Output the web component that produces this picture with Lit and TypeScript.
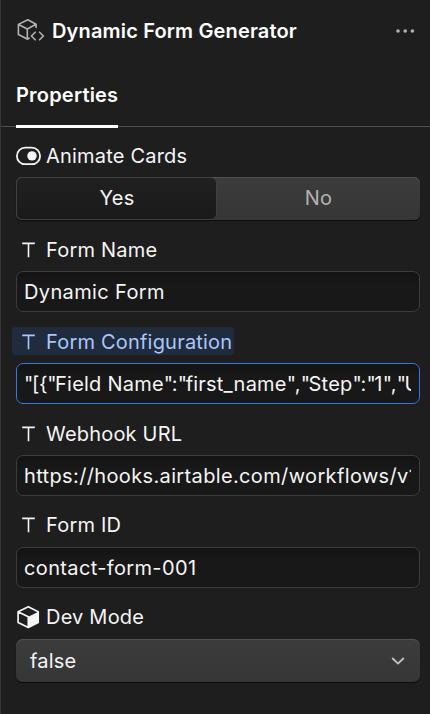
import { LitElement, html, css, svg, nothing } from "lit";
import { customElement, property } from "lit/decorators.js";
import { classMap } from "lit/directives/class-map.js";

const textIcon = svg`<path d="M6.2 5.4H18.8M12.5 5.4V19.2" stroke-width="1.6"/>`;
const toggleIcon = svg`<rect x="0.9" y="3.6" width="23.2" height="16.6" rx="8.3" stroke-width="1.8"/><circle cx="16" cy="11.9" r="4.7" fill="currentColor" stroke="none"/>`;
const cubeIcon = svg`<path d="M12.3 1.7 22.2 6.7V17.4L12.3 22.4 2.1 17.4V6.7Z M2.4 7 12.3 11.8V22" stroke-width="1.7" stroke-linejoin="round"/><path d="M12.3 11.8 22.4 6.7V17.6L12.3 22.6Z" fill="currentColor" stroke="none"/>`;
const icons = { text: textIcon, toggle: toggleIcon, cube: cubeIcon };

@customElement("property-row")
class PropertyRow extends LitElement {
  @property() label = "";
  @property() icon: keyof typeof icons = "text";
  @property() value = "";
  @property({ type: Boolean }) active = false;
  @property({ type: Boolean }) raised = false;

  static styles = css`
    :host { display: block; }
    .label {
      box-sizing: border-box; display: flex; align-items: center; width: max-content; height: 28px;
      margin: 0 0 8px -4px; padding: 1px 2px 0 4px; border-radius: 4px;
      font-size: 20px; letter-spacing: 0.2px; color: #f5f5f5;
    }
    .label.active { background: #202c3d; color: #a9c7fa; }
    .label.raised { padding: 0 2px 1px 4px; }
    .icon { width: 25px; height: 24px; margin-right: 5px; fill: none; stroke: currentColor; flex: none; }
    .field {
      box-sizing: border-box; height: 41px; padding: 0 8px 0 7px;
      border: 1px solid #3c3c3c; border-radius: 7px;
      background: linear-gradient(#131313, #181818 30%);
      color: #f5f5f5; font-size: 20px; line-height: 40px; letter-spacing: 0.36px;
    }
    .field.active { border-color: #3478e0; letter-spacing: 0.22px; }
    .value { display: block; overflow: hidden; white-space: nowrap; height: 39px; }
    .quote { letter-spacing: -1.4px; }
    .bracket { letter-spacing: -0.3px; }
  `;

  render() {
    const active = { active: this.active };
    const parts = this.value.split(/(["[{])/).map(p =>
      p === '"' ? html`<span class="quote">${p}</span>`
      : p === "[" || p === "{" ? html`<span class="bracket">${p}</span>` : p);
    return html`
      <div class="label ${classMap({ ...active, raised: this.raised })}">
        <svg class="icon" viewBox="0 0 25 24">${icons[this.icon]}</svg><span>${this.label}</span>
      </div>
      ${this.value
        ? html`<div class="field ${classMap(active)}"><span class="value">${parts}</span></div>`
        : nothing}
      <slot></slot>
    `;
  }
}

@customElement("app-root")
class AppRoot extends LitElement {
  static styles = css`
    :host {
      display: block; box-sizing: border-box; width: 430px; height: 714px; overflow: hidden;
      border-left: 1px solid #363636; background: #1e1e1e; color: #f5f5f5;
      font-family: Inter, sans-serif; font-size: 20px;
    }
    .header { display: flex; align-items: center; height: 62px; padding: 0 15px; }
    .component { width: 28px; height: 26px; margin: 0 7px 0 1px; fill: none; stroke: #b2b2b2; stroke-width: 1.6; stroke-linejoin: round; stroke-linecap: round; }
    .title { flex: 1; font-weight: 600; color: #fff; letter-spacing: 0.16px; }
    .more { width: 20px; height: 6px; fill: #b2b2b2; }
    .tabs { height: 66px; box-sizing: border-box; padding: 0 15px; display: flex;
      background: linear-gradient(#4e4e4e, #4e4e4e) 0 64px / 100% 1px no-repeat; }
    .tab { box-sizing: border-box; height: 66px; border-bottom: 3px solid #fff; line-height: 66px; font-weight: 600; color: #fff; letter-spacing: 0.2px; }
    .rows { display: flex; flex-direction: column; gap: 15px; padding: 13px 10px 0 15px; }
    .segmented, .select {
      box-sizing: border-box; height: 43px; display: flex; border-radius: 6px;
      background: linear-gradient(#3c3c3c, #363636);
      box-shadow: inset 0 1px #505050, 0 1px 1px #0c0c0c;
    }
    .option { flex: 1; text-align: center; line-height: 42px; color: #b2b2b2; letter-spacing: 0.2px; }
    .option.chosen { flex: 0 0 201px; box-sizing: border-box; padding-left: 1px; border: 1px solid #404040; line-height: 40px; border-radius: 6px; background: linear-gradient(#202020, #1a1a1a); color: #f5f5f5; }
    .select { align-items: center; justify-content: space-between; padding: 0 14px; letter-spacing: 0.2px; border-radius: 7px; }
    .chevron { width: 16px; height: 12px; fill: none; stroke: #c4c4c4; stroke-width: 1.8; }
  `;

  render() {
    return html`
      <div class="header">
        <svg class="component" viewBox="0 0 28 26">
          <path d="M12.2 20.2 10.7 21.2 1.4 16.5V6.4L10.8 1.7 19.1 6.2V9.4M1.6 6.5 10.3 11 19 6.3M10.3 11V21"/>
          <path d="M18.2 14.2 14.4 18 18.2 21.8M22.6 14.2 26.4 18 22.6 21.8"/>
        </svg>
        <span class="title">Dynamic Form Generator</span>
        <svg class="more" viewBox="0 0 20 6"><circle cx="3" cy="3" r="1.8"/><circle cx="10.2" cy="3" r="1.8"/><circle cx="17.4" cy="3" r="1.8"/></svg>
      </div>
      <div class="tabs"><div class="tab">Properties</div></div>
      <div class="rows">
        <property-row label="Animate Cards" icon="toggle">
          <div class="segmented"><div class="option chosen">Yes</div><div class="option">No</div></div>
        </property-row>
        <property-row label="Form Name" value="Dynamic Form"></property-row>
        <property-row label="Form Configuration" value='"[{"Field Name":"first_name","Step":"1","U' active></property-row>
        <property-row label="Webhook URL" value="https://hooks.airtable.com/workflows/v1"></property-row>
        <property-row label="Form ID" value="contact-form-001" raised></property-row>
        <property-row label="Dev Mode" icon="cube" raised>
          <div class="select">false<svg class="chevron" viewBox="0 0 16 12"><path d="m2.2 3 5.8 5.6L13.8 3"/></svg></div>
        </property-row>
      </div>
    `;
  }
}
